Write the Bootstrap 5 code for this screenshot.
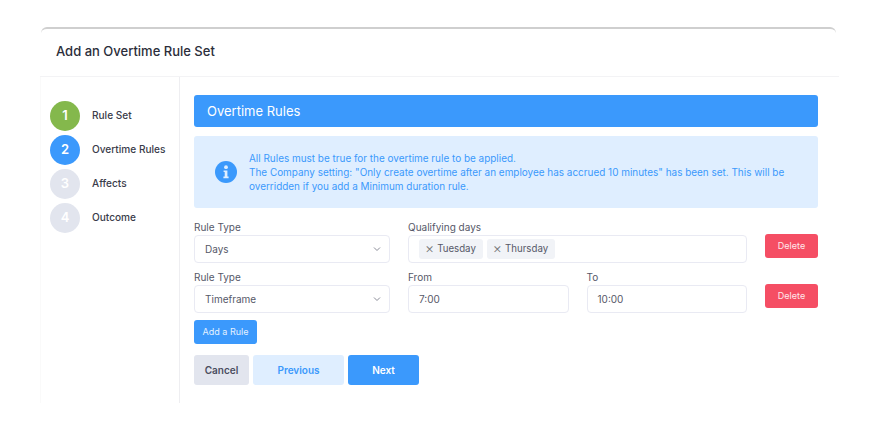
<!DOCTYPE html>
<html lang="en">
<head>
  <meta charset="UTF-8" />
  <meta name="viewport" content="width=device-width, initial-scale=1.0">
  <title>Add an Overtime Rule Set</title>
  <link href="https://cdn.jsdelivr.net/npm/bootstrap@5.3.0/dist/css/bootstrap.min.css" rel="stylesheet">
  <style>
    body { font-family: Inter, "Noto Sans", sans-serif; background: #fff; color: #4a4d5e; overflow: hidden; }
    .rule-panel { width: 795px; margin: 27px 0 0 41px; border-top: 2px solid #cfcfcf; border-radius: 6px 6px 0 0; }
    .panel-title { height: 48px; margin: 0 -3px 0 -1px; padding: 0 0 2px 16px; border-bottom: 1px solid #f3f3f5; font-size: 13px; font-weight: 500; color: #2b2d3a; }
    .side-steps { width: 140px; height: 326px; padding: 22px 0 0 9px; border-right: 1px solid #eeeef1; border-left: 1px solid #fafafa; margin-left: -1px; }
    .step-row { height: 34px; font-size: 10.1px; font-weight: 500; color: #3a3c4a; }
    .step-dot { width: 30px; height: 30px; margin-right: 12px; font-size: 13px; font-weight: 600; color: #fff; }
    .dot-done { background: #84b84c; }
    .dot-now { background: #3b99fc; }
    .dot-todo { background: #e2e5ee; }
    .main-pane { width: 624px; margin-left: 14px; padding-top: 18px; }
    .pane-head { height: 32px; padding: 1px 0 0 13px; background: #3b99fc; border-radius: 3px; color: #fff; font-size: 13px; }
    .info-box { height: 72px; margin-top: 9px; padding-left: 20px; background: #dfeeff; border-radius: 3px; color: #3b99fc; font-size: 9.95px; line-height: 14px; }
    .info-box svg { margin-left: 1px; margin-right: 12px; flex: none; }
    .rule-line { gap: 18px; height: 43px; }
    .first-line { margin-top: 12px; margin-bottom: 7px; }
    .field-label { display: block; height: 15px; font-size: 10px; line-height: 15px; color: #565868; }
    .fake-input { height: 28px; padding-left: 10px; border: 1px solid #e9eaf3; border-radius: 4px; background: #fff; font-size: 10px; color: #565868; }
    .w-type { width: 196px; }
    .w-days { width: 339px; }
    .w-time { width: 160.5px; }
    .day-chip { height: 20px; padding: 0 7px 0 6px; margin-right: 4px; background: #f1f3f7; border-radius: 3px; font-size: 9.7px; }
    .day-chip span { margin-right: 3px; padding-bottom: 3px; font-size: 14px; line-height: 1; font-weight: 300; color: #777; }
    .btn-del { width: 53px; height: 24px; margin-top: 14px; padding: 0; border: 0; border-radius: 3px; background: #f54e64; color: #ffe9ec; font-size: 9px; }
    .btn-add { width: 63px; height: 24px; margin-top: 7px; padding: 0; border: 0; border-radius: 3px; background: #3b99fc; color: #e4f1ff; font-size: 9px; }
    .wizard-foot { margin-top: 11px; gap: 4px; }
    .wizard-foot .btn { height: 30px; padding: 0; border: 0; border-radius: 3px; font-size: 10px; font-weight: 600; }
    .btn-cancel { width: 55px; background: #e2e5ee; color: #4a4d5e; }
    .btn-prev { width: 91px; background: #dfeeff; color: #3b99fc; }
    .btn-next { width: 71px; background: #3b99fc; color: #fff; }
  </style>
</head>
<body>

<div class="rule-panel">
  <div class="panel-title d-flex align-items-center">Add an Overtime Rule Set</div>

  <div class="d-flex">
    <div class="side-steps">
      <div class="step-row d-flex align-items-center"><div class="step-dot dot-done rounded-circle d-flex align-items-center justify-content-center">1</div>Rule Set</div>
      <div class="step-row d-flex align-items-center"><div class="step-dot dot-now rounded-circle d-flex align-items-center justify-content-center">2</div>Overtime Rules</div>
      <div class="step-row d-flex align-items-center"><div class="step-dot dot-todo rounded-circle d-flex align-items-center justify-content-center">3</div>Affects</div>
      <div class="step-row d-flex align-items-center"><div class="step-dot dot-todo rounded-circle d-flex align-items-center justify-content-center">4</div>Outcome</div>
    </div>

    <div class="main-pane">
      <div class="pane-head d-flex align-items-center">Overtime Rules</div>

      <div class="info-box d-flex align-items-center">
        <svg width="22" height="22" viewBox="0 0 22 22"><circle cx="11" cy="11" r="11" fill="#3b99fc"/><circle cx="11" cy="6.2" r="1.9" fill="#dfeeff"/><path d="M8.6 9.4h3.8v6.2h1.2v1.7H8.4v-1.7h1.3v-4.5H8.6z" fill="#dfeeff"/></svg>
        <div>All Rules must be true for the overtime rule to be applied.<br>The Company setting: "Only create overtime after an employee has accrued 10 minutes" has been set. This will be<br>overridden if you add a Minimum duration rule.</div>
      </div>

      <div class="rule-line first-line d-flex">
        <div class="w-type">
          <label class="field-label">Rule Type</label>
          <div class="fake-input d-flex align-items-center justify-content-between pe-2">Days
            <svg width="8" height="6" viewBox="0 0 8 6"><path d="M1 1.5l3 3 3-3" fill="none" stroke="#8a8c98" stroke-width="1"/></svg>
          </div>
        </div>
        <div class="w-days">
          <label class="field-label">Qualifying days</label>
          <div class="fake-input d-flex align-items-center">
            <div class="day-chip d-flex align-items-center"><span>×</span>Tuesday</div>
            <div class="day-chip d-flex align-items-center"><span>×</span>Thursday</div>
          </div>
        </div>
        <button class="btn btn-del" type="button">Delete</button>
      </div>

      <div class="rule-line d-flex">
        <div class="w-type">
          <label class="field-label">Rule Type</label>
          <div class="fake-input d-flex align-items-center justify-content-between pe-2">Timeframe
            <svg width="8" height="6" viewBox="0 0 8 6"><path d="M1 1.5l3 3 3-3" fill="none" stroke="#8a8c98" stroke-width="1"/></svg>
          </div>
        </div>
        <div class="w-time">
          <label class="field-label">From</label>
          <div class="fake-input d-flex align-items-center">7:00</div>
        </div>
        <div class="w-time">
          <label class="field-label">To</label>
          <div class="fake-input d-flex align-items-center">10:00</div>
        </div>
        <button class="btn btn-del" type="button">Delete</button>
      </div>

      <button class="btn btn-add d-block" type="button">Add a Rule</button>

      <div class="wizard-foot d-flex">
        <button class="btn btn-cancel" type="button">Cancel</button>
        <button class="btn btn-prev" type="button">Previous</button>
        <button class="btn btn-next" type="button">Next</button>
      </div>
    </div>
  </div>
</div>

<script src="https://cdn.jsdelivr.net/npm/bootstrap@5.3.0/dist/js/bootstrap.bundle.min.js"></script>
</body>
</html>
